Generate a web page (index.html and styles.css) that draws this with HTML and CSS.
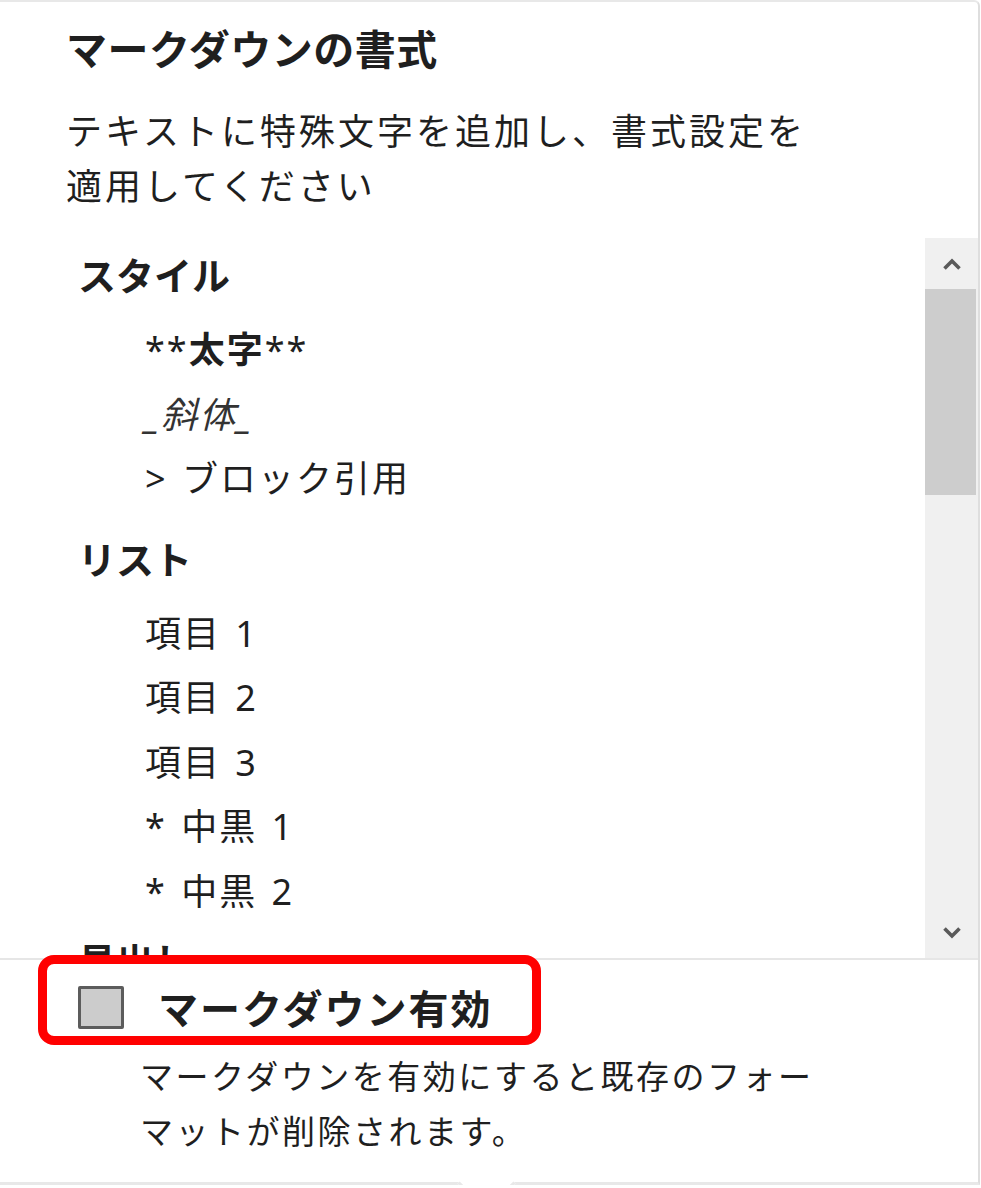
FILE: index.html
```html
<!DOCTYPE html>
<html lang="ja">

<head>
    <meta charset="UTF-8">
    <meta name="viewport" content="width=device-width, initial-scale=1.0">
    <title>マークダウンの書式</title>
    <link rel="stylesheet" href="styles.css">
</head>

<body>
    <div class="panel">
        <div class="intro">
            <h1 class="title">マークダウンの書式</h1>
            <p class="desc">テキストに特殊文字を追加し、書式設定を<br>適用してください</p>
        </div>

        <div class="scrollBox">
            <div class="scrollContent">
                <div class="group">
                    <h2>スタイル</h2>
                    <ul>
                        <li>**<strong>太字</strong>**</li>
                        <li><em>_斜体_</em></li>
                        <li>&gt; ブロック引用</li>
                    </ul>
                </div>
                <div class="group">
                    <h2>リスト</h2>
                    <ul>
                        <li>項目 1</li>
                        <li>項目 2</li>
                        <li>項目 3</li>
                        <li>* 中黒 1</li>
                        <li>* 中黒 2</li>
                    </ul>
                </div>
                <div class="group peek">
                    <h2>見出し</h2>
                </div>
            </div>
            <div class="scrollbar">
                <div class="arrow">
                    <svg width="20" height="14" viewBox="0 0 20 14"><path d="M2.5 11.5 L10 4 L17.5 11.5" fill="none" stroke="#5a5a5a" stroke-width="3.6"/></svg>
                </div>
                <div class="track">
                    <div class="thumb"></div>
                </div>
                <div class="arrow">
                    <svg width="20" height="14" viewBox="0 0 20 14"><path d="M2.5 2.5 L10 10 L17.5 2.5" fill="none" stroke="#5a5a5a" stroke-width="3.6"/></svg>
                </div>
            </div>
        </div>

        <div class="footer">
            <div class="option">
                <span class="checkbox"></span>
                <label class="optLabel">マークダウン有効</label>
            </div>
            <p class="note">マークダウンを有効にすると既存のフォー<br>マットが削除されます。</p>
        </div>
    </div>
</body>

</html>
```

FILE: styles.css
```css
* {
    box-sizing: border-box;
    margin: 0;
    padding: 0;
}
body {
    background-color: #ffffff;
    color: #1f1f1f;
    font-family: "Noto Sans", "Noto Sans CJK JP", sans-serif;
    overflow: hidden;
}
.panel {
    position: relative;
    width: 980px;
    height: 1185px;
    border-top: solid 2px #e8e8e8;
    border-right: solid 2px #dedede;
    border-bottom: solid 3px #e8e8e8;
    border-top-right-radius: 6px;
    display: flex;
    flex-direction: column;
}
/* little pointer under the popup */
.panel::after {
    content: "";
    position: absolute;
    left: 466px;
    bottom: -22px;
    width: 38px;
    height: 38px;
    background-color: #ffffff;
    border-right: solid 3px #e8e8e8;
    border-bottom: solid 3px #e8e8e8;
    transform: rotate(45deg);
}
.intro {
    padding: 19px 0 0 66px;
    height: 236px;
}
.title {
    font-size: 41px;
    line-height: 56px;
    font-weight: 700;
    letter-spacing: 0.5px;
}
.desc {
    margin-top: 27px;
    font-size: 36px;
    line-height: 55px;
    letter-spacing: 3px;
}
.scrollBox {
    display: flex;
    height: 720px;
}
.scrollContent {
    flex: 1;
    overflow: hidden;
    padding: 5px 0 0 78px;
}
.group {
    margin-bottom: 15px;
}
.group h2 {
    font-size: 38px;
    line-height: 64px;
    font-weight: 700;
    margin-bottom: 11px;
}
.peek {
    margin-top: -10px;
}
.group ul {
    list-style: none;
    padding-left: 67px;
    font-size: 36px;
    line-height: 64.5px;
    letter-spacing: 2px;
    word-spacing: 3px;
}
.group strong {
    font-weight: 700;
}
.group em {
    font-style: italic;
    color: #333333;
}
.scrollbar {
    width: 53px;
    background-color: #f0f0f0;
    display: flex;
    flex-direction: column;
}
.arrow {
    height: 51px;
    display: flex;
    align-items: center;
    justify-content: center;
}
.track {
    flex: 1;
    padding-right: 2px;
}
.thumb {
    height: 206px;
    background-color: #cdcdcd;
}
.footer {
    flex: 1;
    border-top: solid 2px #e6e6e6;
}
.option {
    margin: -5px 0 0 38px;
    width: 503px;
    height: 90px;
    border: solid 9px #ff0000;
    border-radius: 16px;
    display: flex;
    align-items: flex-start;
    padding: 22px 0 0 31px;
}
.checkbox {
    width: 46px;
    height: 43px;
    background-color: #cccccc;
    border: solid 3px #5c5c5c;
    border-radius: 2px;
}
.optLabel {
    margin-left: 34px;
    font-size: 40px;
    line-height: 46px;
    font-weight: 700;
    letter-spacing: 2px;
}
.note {
    margin: 4px 0 0 140px;
    font-size: 33px;
    line-height: 55px;
    letter-spacing: 2.5px;
}
```
